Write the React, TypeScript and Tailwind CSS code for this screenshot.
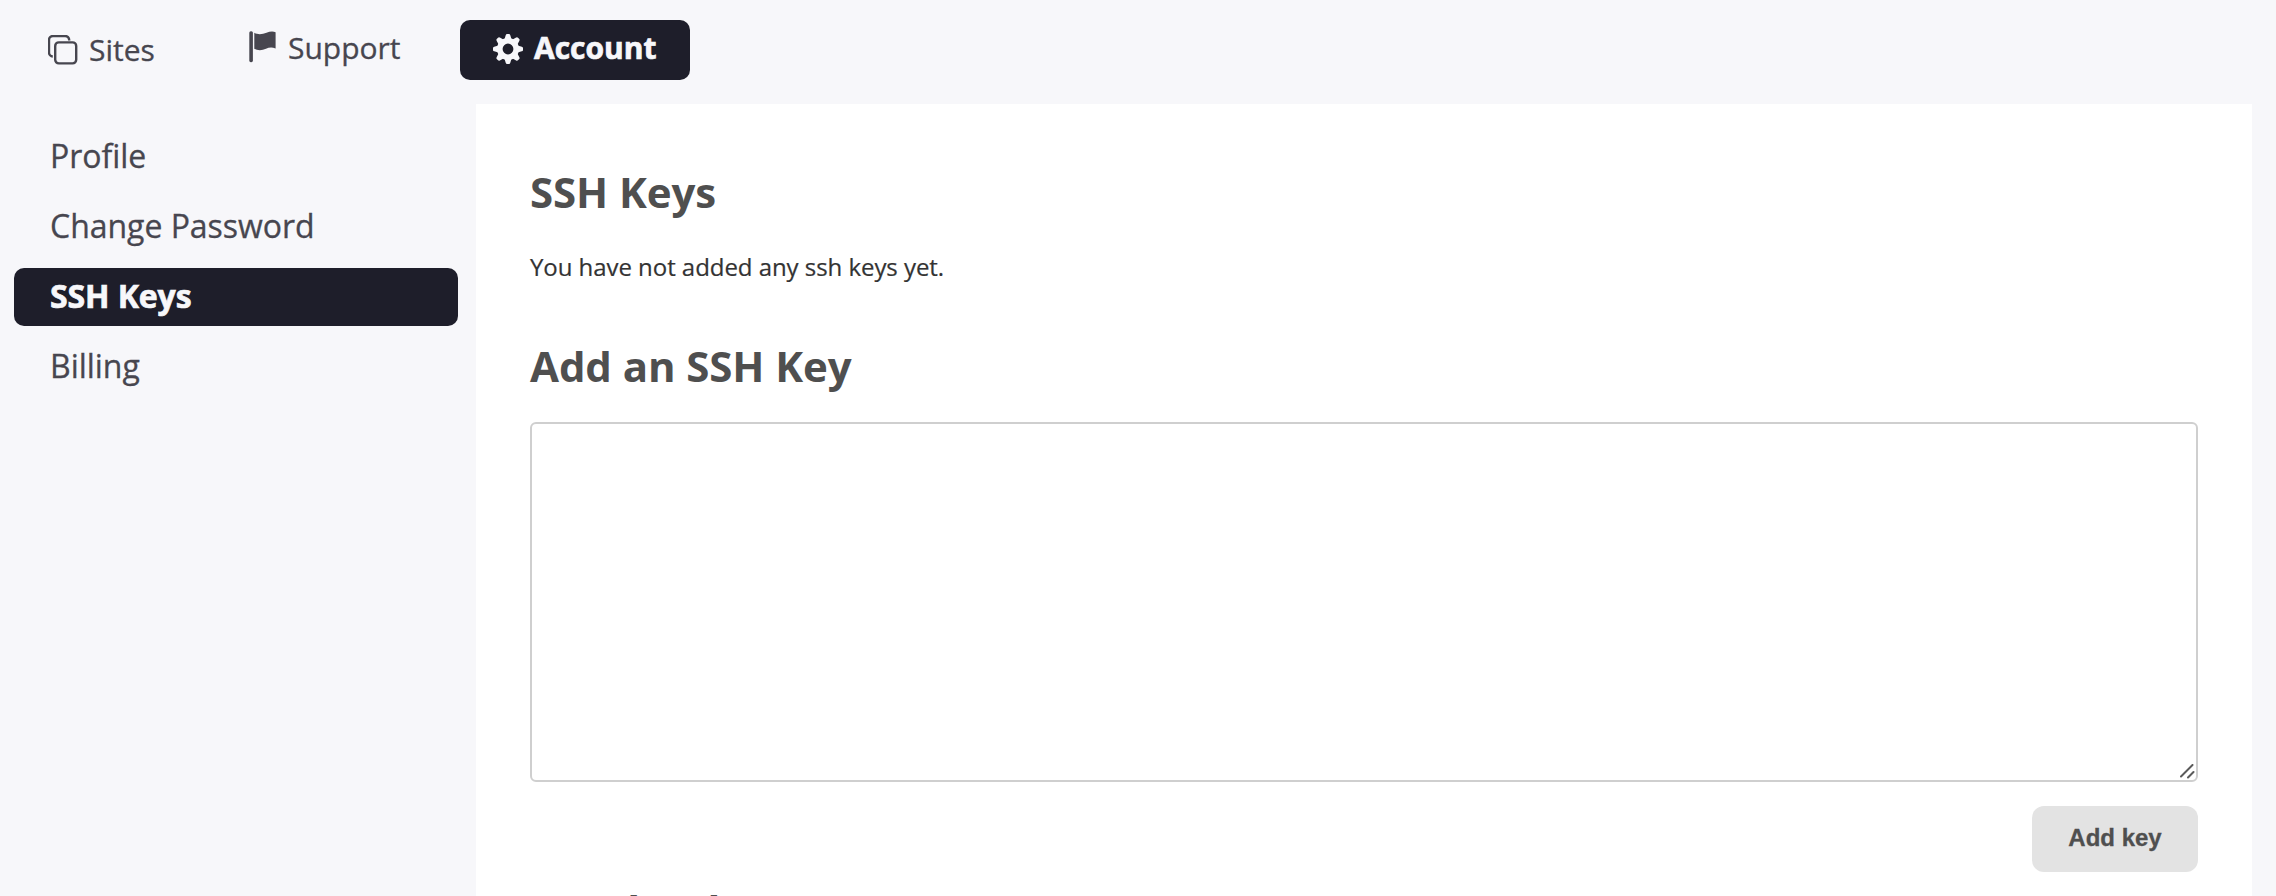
import React from "react";

function SitesIcon() {
  return (
    <svg width="30" height="30" viewBox="0 0 30 30" fill="none" stroke="currentColor" strokeWidth="2.4">
      <path d="M21.2 5.6 V5 a4 4 0 0 0 -4 -4 H5 a4 4 0 0 0 -4 4 V17.5 a4 4 0 0 0 3.8 4" />
      <rect x="7.2" y="7.4" width="21" height="21" rx="3.6" />
    </svg>
  );
}

function FlagIcon() {
  return (
    <svg width="28" height="32" viewBox="0 0 28 32" fill="currentColor">
      <rect x="1.3" y="0.2" width="3.6" height="31" rx="1.6" />
      <path d="M6.3 1.8 C10 4 14.5 3.4 18.5 1.8 C22 .3 25.2 .3 27.6 1.2 V17.6 C24 16 21 16.4 18 17.8 C14 19.6 9.5 19.6 6.3 17.8Z" />
    </svg>
  );
}

function GearIcon() {
  return (
    <svg width="30" height="30" viewBox="-15 -15 30 30" fill="currentColor">
      <circle r="8.2" fill="none" stroke="currentColor" strokeWidth="5.6" />
      {[0, 45, 90, 135, 180, 225, 270, 315].map((a) => (
        <path key={a} transform={`rotate(${a})`} d="M-3.6 -9.5 L-2.3 -13.8 Q-2 -15 -.9 -15 H.9 Q2 -15 2.3 -13.8 L3.6 -9.5Z" />
      ))}
    </svg>
  );
}

const links = ["Profile", "Change Password", "SSH Keys", "Billing"];

export default function App() {
  return (
    <div className="flex h-[896px] flex-col overflow-hidden bg-[#f7f7fa] font-['Open_Sans',sans-serif] text-[#47464f]">
      <nav className="flex h-[104px] shrink-0 items-start pt-5 text-[30px]">
        <a className="ml-12 flex h-[60px] w-[200px] items-center gap-[11px] [-webkit-text-stroke:0.3px]">
          <SitesIcon />
          <span className="pb-0.5">Sites</span>
        </a>
        <a className="flex h-[54px] w-[212px] items-center gap-3 [-webkit-text-stroke:0.3px]">
          <FlagIcon />
          <span>Support</span>
        </a>
        <a className="flex h-[60px] w-[230px] items-center gap-[11px] rounded-[10px] bg-[#1e1e2a] pb-0.5 pl-[33px] font-bold text-[#f7f7fa] [-webkit-text-stroke:0.7px]">
          <GearIcon />
          <span className="pb-1">Account</span>
        </a>
      </nav>
      <div className="flex min-h-0 grow">
        <aside className="flex w-[476px] shrink-0 flex-col gap-3 pt-6 pr-[18px] pl-[14px] text-[32px] leading-[56px]">
          {links.map((l) => (
            <a
              key={l}
              className={
                l === "SSH Keys"
                  ? "h-[58px] rounded-[10px] bg-[#1e1e2a] pl-9 font-bold tracking-[-0.1px] text-[#f7f7fa] [-webkit-text-stroke:0.7px]"
                  : "h-[58px] pl-9 tracking-[-0.03px] [-webkit-text-stroke:0.3px]"
              }
            >
              {l}
            </a>
          ))}
        </aside>
        <main className="mr-6 grow bg-white px-[54px] pt-[59px]">
          <h2 className="text-[42px] leading-[58px] font-bold tracking-[-0.1px] text-[#4f4f4f]">SSH Keys</h2>
          <p className="mt-7 text-[24px] leading-9 tracking-[-0.05px] text-[#333] [-webkit-text-stroke:0.2px]">You have not added any ssh keys yet.</p>
          <h2 className="mt-[52px] text-[42px] leading-[58px] font-bold tracking-[-0.1px] text-[#4f4f4f]">Add an SSH Key</h2>
          <div className="mt-[27px] flex h-[360px] items-end justify-end rounded-[6px] border-2 border-[#cfcfcf]">
            <svg width="16" height="16" viewBox="0 0 16 16" fill="none" stroke="#5a5a5a" strokeWidth="2" strokeLinecap="round">
              <path d="M1 12.5 L12.5 1 M8 13.5 L13.5 8" />
            </svg>
          </div>
          <div className="mt-6 flex justify-end">
            <button className="h-[66px] w-[166px] rounded-[12px] bg-[#e3e3e3] pb-0.5 font-['Liberation_Sans',sans-serif] text-[24px] font-bold text-[#4f4f4f] [-webkit-text-stroke:0.3px]">
              Add key
            </button>
          </div>
          <h2 className="mt-[9px] text-[42px] leading-[58px] font-bold tracking-[-0.1px] text-[#4f4f4f]">Need Help?</h2>
        </main>
      </div>
    </div>
  );
}
